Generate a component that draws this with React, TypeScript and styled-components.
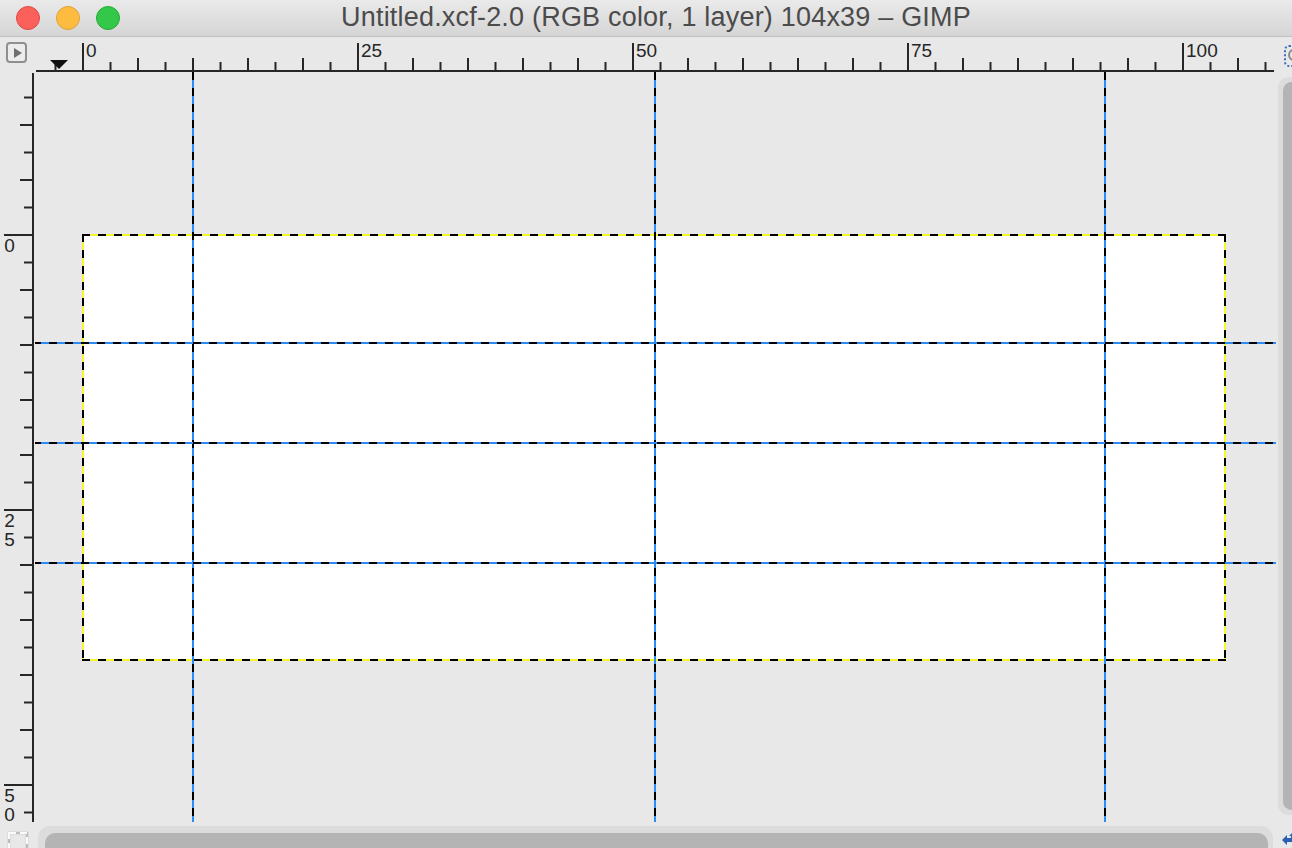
import React from 'react';
import styled, { createGlobalStyle } from 'styled-components';

// ruler geometry, in screen pixels: one image pixel is 11 screen pixels
const UNIT = 11;
const ORIGIN_X = 48; // image x = 0, inside the view / top ruler
const ORIGIN_Y = 163; // image y = 0, inside the view / left ruler
const VIEW_W = 1241;
const VIEW_H = 750;

const vGuides = [157, 619, 1069];
const hGuides = [270, 370, 490];

const GlobalStyle = createGlobalStyle`
  html, body { margin: 0; padding: 0; }
  body {
    width: 1292px;
    height: 848px;
    overflow: hidden;
    background: #e8e8e8;
    font-family: "Liberation Sans", Arial, sans-serif;
  }
`;

const Window = styled.div`
  width: 1292px;
  height: 848px;
  display: flex;
  flex-direction: column;
  overflow: hidden;
  background: #e8e8e8;
`;

const TitleBar = styled.div`
  height: 36px;
  flex: none;
  display: flex;
  align-items: center;
  background: linear-gradient(#ebeaeb, #d6d5d6);
  border-bottom: 1px solid #c2c2c2;
`;

const Lights = styled.div`
  display: flex;
  gap: 16px;
  padding-left: 16px;
  width: 120px;
  box-sizing: border-box;
`;

const Light = styled.span<{ $color: string; $edge: string }>`
  width: 24px;
  height: 24px;
  border-radius: 50%;
  box-sizing: border-box;
  background: ${p => p.$color};
  border: 1px solid ${p => p.$edge};
`;

const Title = styled.div`
  flex: 1;
  padding-right: 100px;
  text-align: center;
  font-size: 27px;
  letter-spacing: 0.2px;
  color: #4b4b4b;
  white-space: nowrap;
  margin-top: -2px;
`;

const Workspace = styled.div`
  flex: 1;
  display: grid;
  grid-template-columns: 35px ${VIEW_W}px 16px;
  grid-template-rows: 35px ${VIEW_H}px 26px;
  overflow: hidden;
`;

const Cell = styled.div<{ $pad?: string }>`
  position: relative;
  overflow: hidden;
  padding: ${p => p.$pad || '0'};
  box-sizing: border-box;
`;

const MenuButton = styled.div`
  width: 21px;
  height: 21px;
  box-sizing: border-box;
  border: 2px solid #8f8f8f;
  border-radius: 4px;
  background: #ececec;
  display: flex;
  align-items: center;
  justify-content: center;

  &::after {
    content: '';
    margin-left: 2px;
    border-left: 8px solid #6f6f6f;
    border-top: 5px solid transparent;
    border-bottom: 5px solid transparent;
  }
`;

const RulerSvg = styled.svg`
  display: block;
  font-family: "Liberation Sans", Arial, sans-serif;
  font-size: 19px;
  fill: #262626;
`;

const View = styled.div`
  position: relative;
  overflow: hidden;
  background: #e8e8e8;
`;

const ants = (deg: number) =>
  `repeating-linear-gradient(${deg}deg, #000 0 8px, #f6f62e 8px 16px)`;

const ImageCanvas = styled.div`
  position: absolute;
  left: 47px;
  top: 162px;
  width: 1144px;
  height: 427px;
  background:
    ${ants(90)} top / 100% 2px no-repeat,
    ${ants(90)} bottom / 100% 2px no-repeat,
    ${ants(180)} left / 2px 100% no-repeat,
    ${ants(180)} right / 2px 100% no-repeat,
    #ffffff;
`;

const Guide = styled.div<{ $vertical?: boolean }>`
  position: absolute;
  z-index: 2;
  ${p =>
    p.$vertical
      ? `top: 0; bottom: 0; width: 2px;
         background: repeating-linear-gradient(180deg, #000 0 8px, #2a8cf4 8px 16px);`
      : `left: -2px; right: 0; height: 2px;
         background: repeating-linear-gradient(90deg, #000 0 8px, #2a8cf4 8px 16px);`}
`;

const VTrack = styled.div`
  width: 22px;
  height: 100%;
  box-sizing: border-box;
  background: #dcdcdc;
  border-radius: 12px;
  padding: 5px 0 5px 5px;
  display: flex;
`;

const HTrack = styled.div`
  height: 34px;
  box-sizing: border-box;
  background: #dcdcdc;
  border-radius: 12px;
  padding: 7px 5px 0 7px;
  display: flex;
`;

const Thumb = styled.div`
  flex: 1;
  background: #b4b4b4;
  border-radius: 10px;
`;

function TopRuler() {
  const ticks: React.ReactNode[] = [];
  const labels: React.ReactNode[] = [];
  for (let u = -2.5; u <= 107.5; u += 2.5) {
    const x = ORIGIN_X + u * UNIT;
    const major = u % 25 === 0;
    const mid = u % 5 === 0;
    const y = major ? 6 : mid ? 21 : 25;
    ticks.push(<rect key={u} x={x - 1} y={y} width={2} height={35 - y} />);
    if (major) {
      labels.push(
        <text key={'l' + u} x={x + 3} y={19.5}>
          {u}
        </text>
      );
    }
  }
  return (
    <RulerSvg width={VIEW_W} height={35}>
      <rect x={1} y={33} width={1238} height={2} />
      {ticks}
      {labels}
      <path d="M15 23 H33 L24 32 Z" fill="#111" />
    </RulerSvg>
  );
}

function LeftRuler() {
  const ticks: React.ReactNode[] = [];
  const labels: React.ReactNode[] = [];
  for (let v = -12.5; v <= 52.5; v += 2.5) {
    const y = ORIGIN_Y + v * UNIT;
    const major = v % 25 === 0;
    const mid = v % 5 === 0;
    const x = major ? 4 : mid ? 20 : 24;
    ticks.push(<rect key={v} x={x} y={y - 1} width={34 - x} height={2} />);
    if (major) {
      String(v)
        .split('')
        .forEach((d, i) =>
          labels.push(
            <text key={`l${v}-${i}`} x={9.5} y={y + 17 + i * 19} textAnchor="middle">
              {d}
            </text>
          )
        );
    }
  }
  return (
    <RulerSvg width={35} height={VIEW_H}>
      <rect x={32} y={1} width={2} height={VIEW_H - 1} />
      {ticks}
      {labels}
    </RulerSvg>
  );
}

function ZoomToggle() {
  return (
    <svg width="24" height="22" viewBox="0 0 24 22">
      <rect x="1" y="1" width="22" height="20" rx="4" fill="none" stroke="#3a6fc4" strokeWidth="2" strokeDasharray="2 2" />
      <circle cx="10" cy="10" r="5" fill="none" stroke="#8a8a8a" strokeWidth="2" />
    </svg>
  );
}

function QuickMask() {
  return (
    <svg width="22" height="22" viewBox="0 0 22 22">
      <rect x="2" y="2" width="18" height="18" fill="none" stroke="#bdbdbd" strokeWidth="2.5" />
      <rect x="2" y="2" width="18" height="18" fill="none" stroke="#fafafa" strokeWidth="2" strokeDasharray="7 4" />
    </svg>
  );
}

function NavigateIcon() {
  return (
    <svg width="24" height="24" viewBox="0 0 24 24">
      <path d="M1 9 L6 4 V7 H12 V11 H6 V14 Z" fill="#2a5fb3" />
      <path d="M12 1 L16 5 H14 V9 H10 V5 H8 Z" fill="#2a5fb3" />
    </svg>
  );
}

export default function App() {
  return (
    <Window>
      <GlobalStyle />
      <TitleBar>
        <Lights>
          <Light $color="#fc605b" $edge="#de4a44" />
          <Light $color="#fdbc40" $edge="#dea236" />
          <Light $color="#34c84a" $edge="#27aa35" />
        </Lights>
        <Title>Untitled.xcf-2.0 (RGB color, 1 layer) 104x39 – GIMP</Title>
      </TitleBar>
      <Workspace>
        <Cell $pad="5px 0 0 6px">
          <MenuButton />
        </Cell>
        <Cell>
          <TopRuler />
        </Cell>
        <Cell $pad="8px 0 0 8px">
          <ZoomToggle />
        </Cell>

        <Cell>
          <LeftRuler />
        </Cell>
        <View>
          <ImageCanvas />
          {vGuides.map(x => (
            <Guide key={'v' + x} $vertical style={{ left: x }} />
          ))}
          {hGuides.map(y => (
            <Guide key={'h' + y} style={{ top: y }} />
          ))}
        </View>
        <Cell $pad="5px 0 7px 2px">
          <VTrack>
            <Thumb />
          </VTrack>
        </Cell>

        <Cell $pad="9px 0 0 7px">
          <QuickMask />
        </Cell>
        <Cell $pad="4px 3px 0 3px">
          <HTrack>
            <Thumb />
          </HTrack>
        </Cell>
        <Cell $pad="9px 0 0 5px">
          <NavigateIcon />
        </Cell>
      </Workspace>
    </Window>
  );
}
